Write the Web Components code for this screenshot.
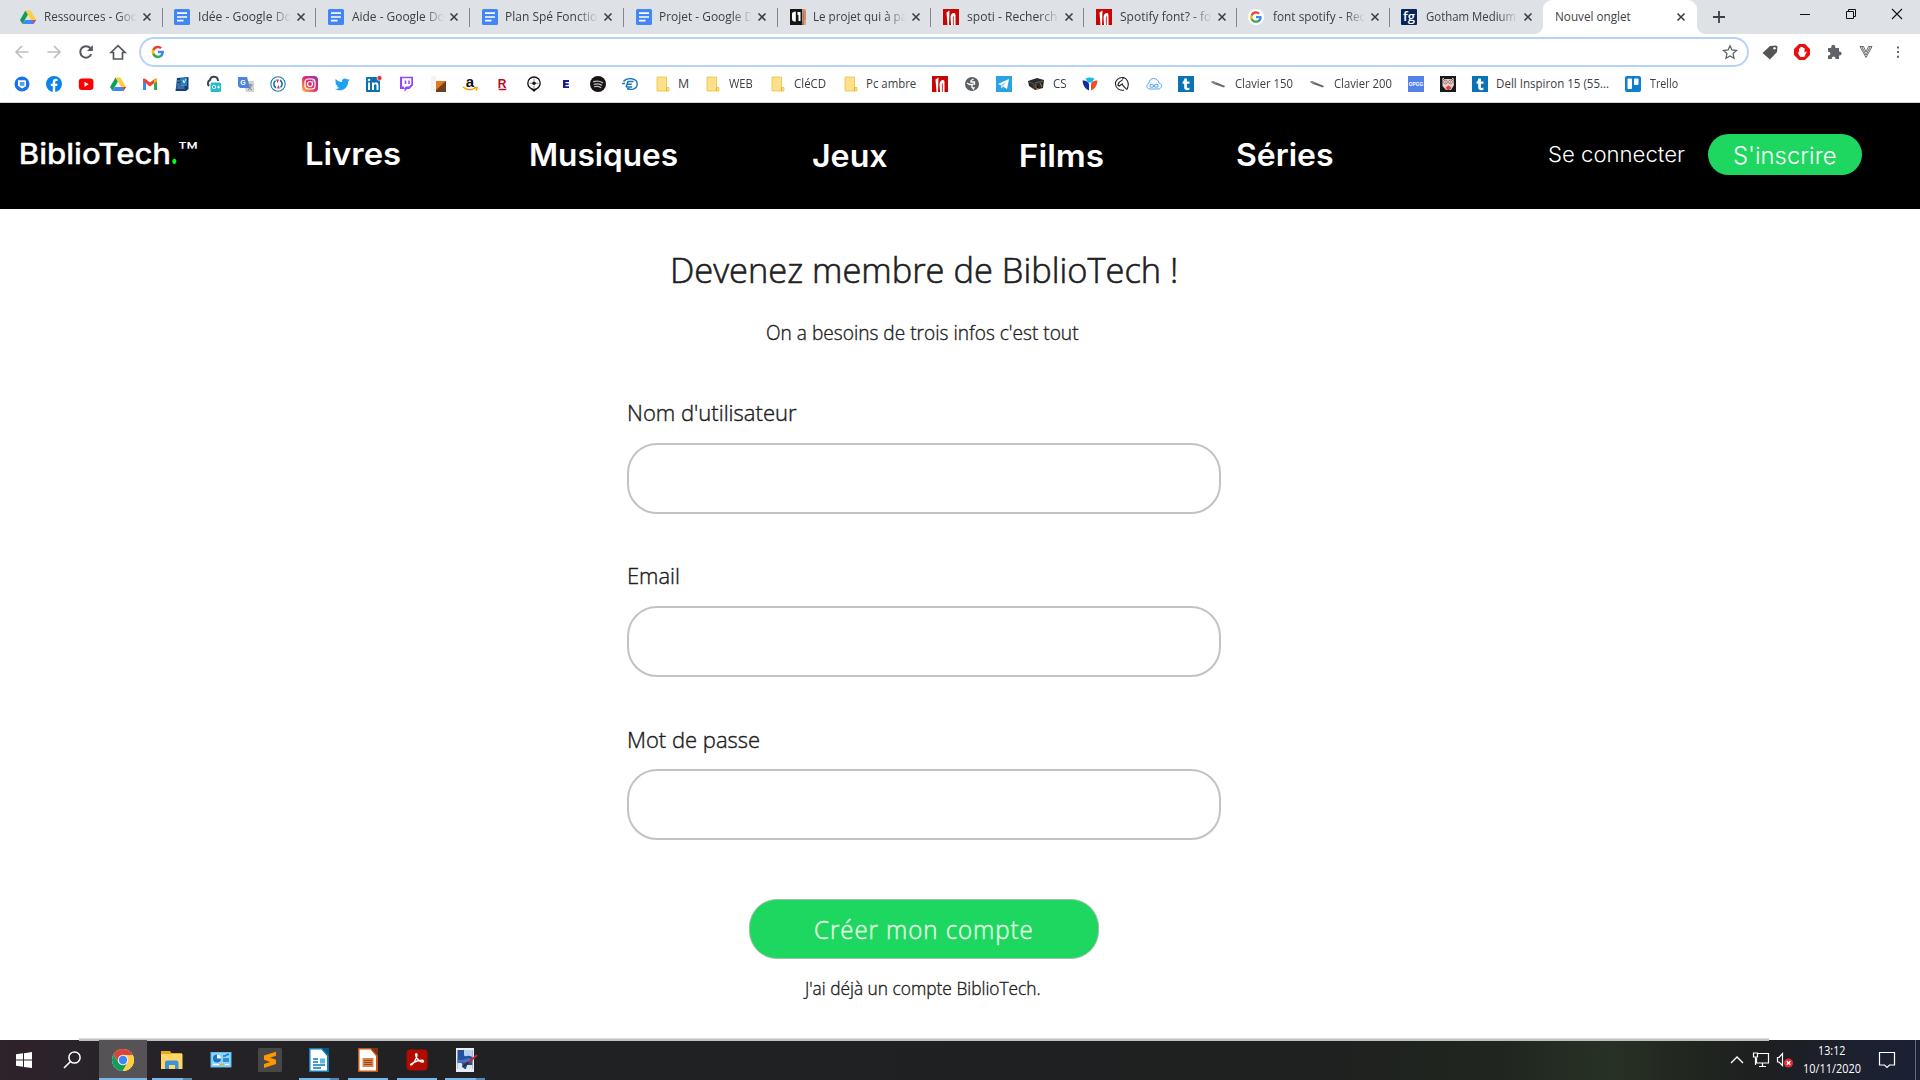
<!DOCTYPE html>
<html lang="fr">
<head>
<meta charset="utf-8">
<title>Nouvel onglet</title>
<style>
html,body{margin:0;padding:0}
body{width:1920px;height:1080px;overflow:hidden;background:#fff;font-family:"Open Sans","Noto Sans",sans-serif}
</style>
</head>
<body>
<desktop-screen></desktop-screen>
<script>
const gPaths = '<path fill="#4285f4" d="M15.5 8.2c0-.6 0-1.1-.2-1.6H8v3h4.2c-.2 1-.7 1.800-1.500 2.300v2h2.500c1.500-1.400 2.300-3.400 2.300-5.700z"/><path fill="#34a853" d="M8 15.800c2.100 0 3.900-.7 5.200-1.900l-2.500-2c-.7.5-1.600.8-2.700.8-2 0-3.800-1.400-4.400-3.200H1v2c1.300 2.600 4 4.300 7 4.300z"/><path fill="#fbbc05" d="M3.600 9.500a4.700 4.700 0 0 1 0-3v-2H1a7.800 7.800 0 0 0 0 7z"/><path fill="#ea4335" d="M8 3.300c1.100 0 2.200.4 3 1.200l2.200-2.200A7.800 7.800 0 0 0 1 4.500l2.600 2C4.200 4.700 6 3.300 8 3.300z"/>';
const letter = (t,x,y,s,c,f='Liberation Sans',w=700) => `<text x="${x}" y="${y}" font-size="${s}" fill="${c}" font-family="${f}" font-weight="${w}" text-anchor="middle">${t}</text>`;
const pen = '<path d="M1 6l2-1 12 5-1 1.400L4 8z" fill="#62676b"/><path d="M1 6l2-1 4 1.700-1 .9z" fill="#8f9498"/>';
const tumblrT = '<path fill="#0b72b5" d="M0 0h16v16H0z"/><path d="M6.200 2.500h2.700v3h2.600v2.300H8.900v3.100c0 1.300 1.200 1.300 2.500.7v2.100c-2.600 1-5.200.4-5.200-2.300V7.800H4.600V5.700c1.100-.4 1.600-1.500 1.600-3.200z" fill="#fff"/>';
const ICONS = {
 drive:'<path fill="#0f9d58" d="M5.500 1.500 0 11l2.500 4L8 5.600z"/><path fill="#ffcd40" d="M5.500 1.500h5L16 11h-5z"/><path fill="#4285f4" d="M5 11h11l-2.500 4h-11z"/><path fill="#ea4335" d="M13.200 11H16l-2.500 4z"/>',
 doc:'<rect width="16" height="16" rx="1.500" fill="#4285f4"/><path d="M3 4.200h10M3 8h10M3 11.700h6.500" stroke="#fff" stroke-width="1.700"/>',
 proj:'<rect width="16" height="16" fill="#151515"/><path d="M2 5q0-2.500 3.800-2.500v10H4Q2 12 2 10zM7.500 3h3v9h-2V6h-1z" fill="#fff"/><path d="M12 0h4v16h-3.500l-.5-5z" fill="#d9a382"/><path d="M13 0v8l.5 8M15 2v9" stroke="#9b6a50" stroke-width=".7"/>',
 n:'<path fill="#c90505" d="M0 0h16v16H0z"/><path d="M4.500 16 3.500 3.500 6.500 1.500 6 16zM8 16 7.500 8Q8 4 11 4q1.500 0 1.500 2v10h-1.800V7l-.8 1V16z" fill="#fff"/>',
 gtab:'<rect width="16" height="16" rx="8" fill="#fff"/><g transform="translate(2 2) scale(.75)">'+gPaths+'</g>',
 g:'<g transform="translate(1.500 1.500) scale(.8)">'+gPaths+'</g>',
 fg:'<rect width="16" height="16" rx="1" fill="#06245a"/>'+letter('fg',8,12,13,'#fff','Open Sans',600),
 msg:'<circle cx="8" cy="8" r="7.500" fill="#1a73e8"/><path d="M4 4.300h7q1 0 1 1v4.400q0 1-1 1L8.500 12.500 6.500 11.500 4 9.700z" fill="#fff"/><path d="M5.800 6h4.600v3.800H5.800z" fill="#5b9bef"/>',
 fb:'<circle cx="8" cy="8" r="8" fill="#0b84ee"/><path d="M6.800 16V10H4.800V7.700h2V6c0-2 1.200-3.200 3.100-3.200l1.600.1v2h-1c-1 0-1.300.6-1.300 1.200v1.600h2.300L11.100 10H9.200v6z" fill="#fff"/>',
 yt:'<rect x=".8" y="2.500" width="14.600" height="11.500" rx="3" fill="#f00"/><path d="M6.500 5.700v5l4.200-2.500z" fill="#fff"/>',
 gmail:'<path fill="#4285f4" d="M1 4l3 2v8H1z"/><path fill="#34a853" d="M12 6l3-2v10h-3z"/><path fill="#ea4335" d="M1 3.500C1 2.500 2.500 2 3.500 3L8 6.500 12.500 3c1-1 2.500-.5 2.500.5V5L8 10.500 1 5z"/><path fill="#fbbc04" d="M12 3.300 15 3v2.200l-3 2.300z"/>',
 book:'<path d="M3 2l11.500-1v12l-2.500 2H1.500z" fill="#123f78"/><path d="M6 2.500l7-1v8.500H7z" fill="#2b82bd"/><path d="M2.500 8h4M2.500 10h8M2.500 12h8M3 5h3" stroke="#75a7ce" stroke-width=".9"/><path d="m9 4 1 3 2-4" stroke="#d8f2ff" fill="none"/>',
 cloud2:'<path d="M3 10C1 8 2 5 4 4c1-5 8-4 8 1" fill="none" stroke="#384551" stroke-width="2"/><rect x="4.500" y="6.500" width="10.500" height="9.500" rx="1.500" fill="#22bcca"/><circle cx="8" cy="11" r="1.700" fill="none" stroke="#fff"/><path d="M11 11h3M12.500 9.500v3" stroke="#fff"/>',
 trans:'<path d="M5 5h11v11H8z" fill="#d2d2d2"/><path d="M0 1h9l3 11H2L0 10z" fill="#4d83dd"/>'+letter('G',5,9,7,'#fff')+'<path d="M9.500 9h5M12 7.800V9M10 14q3-2 3.500-5M10.500 10q1 3 3.500 4" fill="none" stroke="#74818c" stroke-width=".9"/>',
 sync:'<circle cx="8" cy="8" r="7.200" fill="#fff" stroke="#147faf" stroke-width="1.100"/><path d="M6 11.800A4.300 4.300 0 0 1 5.500 4.700M10 4.200A4.300 4.300 0 0 1 10.500 11.300" stroke="#166fa2" stroke-width="1.600" fill="none"/><path d="M6 3.500h3.200L7.500 7zM10 12.500H6.800L8.500 9z" fill="#e33645"/>',
 insta:'<defs><linearGradient id="ig" x1="0" y1="1" x2="1" y2="0"><stop stop-color="#ffc744"/><stop offset=".5" stop-color="#e22a6c"/><stop offset="1" stop-color="#873abe"/></linearGradient></defs><rect width="16" height="16" rx="4" fill="url(#ig)"/><rect x="3" y="3" width="10" height="10" rx="3" fill="none" stroke="#fff" stroke-width="1.200"/><circle cx="8" cy="8" r="2.500" fill="none" stroke="#fff" stroke-width="1.200"/><circle cx="11" cy="5" r=".7" fill="#fff"/>',
 tw:'<path fill="#1da1f2" d="M15.500 3.800c-.6.3-1.100.4-1.700.5.600-.4 1-.9 1.200-1.600-.6.300-1.200.6-1.900.7a3 3 0 0 0-5.100 2.700C5.500 6 3.300 4.800 1.800 3c-.8 1.400-.4 3.100.9 4-.5 0-.9-.1-1.300-.4 0 1.500 1 2.700 2.400 3-.5.100-.9.100-1.300 0 .4 1.200 1.500 2 2.800 2.100A6 6 0 0 1 1 13c1.300.8 2.900 1.300 4.600 1.300 5.500 0 8.700-4.700 8.500-8.900.5-.4 1-.9 1.400-1.600z"/>',
 li:'<rect y="1" width="14" height="15" rx="1" fill="#0a71b0"/><path d="M2 6.500h2V14H2zM6 6.500h2v1c1.500-2 4.500-1.300 4.500 1.800V14h-2V9.700c0-2-2.500-2-2.500 0V14H6z" fill="#fff"/><circle cx="3" cy="4" r="1.300" fill="#fff"/><circle cx="13.500" cy="2" r="2.500" fill="#e53131" stroke="#fff" stroke-width=".7"/>',
 twitch:'<path d="M2 .7h13v8.500L11.500 13H9l-2.500 2.700V13H2z" fill="#9146ff"/><path d="M4 2.300h9.300v6L11 10.600H8L6 12.500v-1.900H4z" fill="#fff"/><path d="M7.500 4.500v3.500M11 4.500v3.500" stroke="#9146ff" stroke-width="1.500"/>',
 orange:'<path d="M1 0v15h15V5H6V0z" fill="#f4f4f4"/><path d="M6 5h10v11H6z" fill="#e87817"/><path d="M6 14 16 5v11H6z" fill="#6b4023"/>',
 amazon:letter('a',8,10.500,15,'#111')+'<path d="M1 11q6 5 12 1.200M12 11.500h3q0 2-1.200 3" stroke="#f90" stroke-width="1.500" fill="none"/>',
 rak:letter('R',8,11.500,12,'#b70b24')+'<path d="M4 12.800h9l-1.500 1.500h-6z" fill="#b70b24"/>',
 pin:'<path d="M4 12 8 16l4-4z" fill="#111"/><circle cx="8" cy="7.200" r="6.200" fill="#fff" stroke="#111" stroke-width="1.300"/><path d="M8 2.500v2.500M8 9.500V12M3.500 7.200H6M10 7.200h2.500" stroke="#777" stroke-width=".9"/><circle cx="8" cy="7.200" r="1.800" fill="#111"/>',
 e:'<path fill="#1c1b8c" d="M5 4h6v2H7.500v1.200H10.700v1.700H7.500V10.200h3.500V12H5z"/>',
 spot:'<circle cx="8" cy="8" r="8" fill="#191414"/><path d="M3.600 5.700q5-1.500 9 1M4.200 8.300q4-1.200 7.300.8M4.700 10.700q3.400-.9 6 .8" stroke="#bbb" stroke-width="1.300" fill="none" stroke-linecap="round"/>',
 ed:'<path d="M1.500 5.500C5 1 15.200 2 15.200 8S8 14 5 12.500" fill="none" stroke="#1b77b7" stroke-width="1.400"/><path d="M5.500 5.500h6M4.800 8.200h5M4 11h6M6 5.500 4 11M0 7.500h3" fill="none" stroke="#1b77b7" stroke-width="1.500"/>',
 folder:'<path d="M3 1h9.500v10.500H15V15H3z" fill="#ffe08a" stroke="#e8c341" stroke-width=".8"/><path d="M12.500 11.500V15" stroke="#d9b12c"/>',
 globe:'<circle cx="8" cy="8" r="7" fill="#5b6064"/><path d="M9.500 3 7 4.500v1.500h3.500v2.200H8.500M3 7l2.500 1.500H8v2.700L9.500 13l.8-2" fill="none" stroke="#fff" stroke-width="1.300"/>',
 tg:'<path fill="#29a3e5" d="M0 0h16v16H0z"/><path d="M2 8l11-5-2 10-4-2.500-1.500 2-.5-3.200z" fill="#fff"/><path d="m5 9.300 5.500-4L7 10.500" fill="#9fcfec"/>',
 box:'<path d="m0 5 9-3 7 2-1 8-8 2-6-4z" fill="#292929"/><path d="m7 7 8-2" stroke="#666"/><path d="M8 8v4l3 1M12 7l2 4" stroke="#a97b38"/><path d="m1 6 5 2v5" stroke="#565656" fill="none"/>',
 pin3:'<path d="M3.500 2.500q4.500-2 9 0L10 6.500H6z" fill="#18bbe8"/><path d="M.5 4.500q5-.5 6.500 3.500v6.500Q1 12 .5 4.500z" fill="#102e9b"/><path d="M15.500 4.500q-5-.5-6.500 3.500v6.500q6-2.500 6.500-10z" fill="#f04d23"/>',
 horse:'<path d="M9.500 1.500C4.500 1 1 4.500 1.500 8.500c.5 4 4.500 6.500 8.500 5.500M9.500 1.500C13.500 3 15 7 14 10.500L13 13.500M9.500 1.500 8.500 3.500" fill="none" stroke="#222" stroke-width="1.100"/><path d="M8.500 4Q5 5.500 3.800 9l1.400 1 3-2c.5 2 2.800 3.500 4.500 5.500" fill="none" stroke="#222" stroke-width="1.100"/>',
 infc:'<path d="M4 13C0 13 0 8 3 7c0-6 9-6 10 0 4 1 3 6-1 6z" fill="#f4faff" stroke="#5fa8e9"/><path d="M8 9.800c-1.500-2-4-2-4 0s2.500 2 4 0 4-2 4 0-2.500 2-4 0z" fill="none" stroke="#5fa8e9" stroke-width="1.100"/>',
 t:tumblrT, pen,
 opgg:'<rect width="16" height="16" fill="#5383e8"/>'+letter('OPGG',8,9.700,4.800,'#fff'),
 face:'<rect width="16" height="16" fill="#151919"/><path d="M2.500 4 5 3h6l2.500 1L14 9l-3 5H6L2.500 10z" fill="#e9cfc8"/><circle cx="5.500" cy="6" r="1.800" fill="#fff" stroke="#8b5550" stroke-width=".8"/><circle cx="10.500" cy="6" r="1.800" fill="#fff" stroke="#8b5550" stroke-width=".8"/><path d="M5.500 12q3-5 6 0l-2 2H7.500z" fill="#d74550"/><path d="M5.200 6h.9M10 6h.9" stroke="#333"/><path d="M2 3.500 4 2M12 2l2 1.500" stroke="#eee"/>',
 trello:'<rect width="16" height="16" rx="2" fill="#0c7fd0"/><rect x="2.500" y="2.500" width="4.500" height="10.500" rx=".8" fill="#fff"/><rect x="9" y="2.500" width="4.500" height="6.500" rx=".8" fill="#fff"/>',
 back:'<path d="M14.500 8H2M8 2 2 8l6 6" fill="none" stroke="#bcbec0" stroke-width="1.700"/>',
 fwd:'<path d="M1.500 8H14M8 2l6 6-6 6" fill="none" stroke="#bcbec0" stroke-width="1.700"/>',
 reload:'<path d="M13.200 10.200A5.700 5.700 0 1 1 12.300 4.200L13.700 6" fill="none" stroke="#54585c" stroke-width="2"/><path d="M14.800 1v6H9z" fill="#54585c"/>',
 home:'<path d="M1 8.500 8 1.700l7 6.800H12.500V15h-9V8.500z" fill="none" stroke="#54585c" stroke-width="1.700"/>',
 star:'<path d="m8 1.800 1.900 4.200 4.600.5-3.400 3.100.9 4.600L8 11.900l-4 2.300.9-4.600L1.500 6.500 6.100 6z" fill="none" stroke="#5f6368" stroke-width="1.300"/>',
 tag:'<path d="m8 2 6-.5 1.500 1L15 8l-7 7.500L.5 9z" fill="#555"/><circle cx="12.500" cy="4.300" r="1.200" fill="#fff"/>',
 abp:'<path d="M5 0h6l5 5v6l-5 5H5l-5-5V5z" fill="#e81212"/><path d="M4 8.500 5 8V4.500h1.300V8V3h1.400v5V3h1.400v5V4h1.400v4.800l1.500-1.500.7.7-2.500 5H6.500Q5 12 4 8.500z" fill="#fff"/>',
 puzzle:'<path d="M2 4h3.200C4.800-.2 9.800-.2 9.400 4H13v3.500c3.500-.3 3.500 4.300 0 4V15H9.500c.3-3.500-4-3.500-3.700 0H2v-3.500c3.200.3 3.200-4 0-3.700z" fill="#5f6368"/>',
 v:'<path d="M2 2.500 8 13.500 14 2.500M5.500 2.500 8 8l2.500-5.500M2 2.500h3.500M10.500 2.500H14M3.700 2.500 8 11 12.300 2.500" fill="none" stroke="#55595d" stroke-width=".9"/>',
 dots:'<path d="M7 2.500h2v2H7zM7 7h2v2H7zM7 11.700h2v2H7z" fill="#5f6368"/>',
 plus:'<path d="M8 2v12M2 8h12" stroke="#3c4043" stroke-width="1.800"/>',
 x:'<path d="m4.500 4.500 7 7m0-7-7 7" stroke="#3c4043" stroke-width="1.600"/>',
 min:'<path d="M3 8.500h10" stroke="#111"/>',
 restore:'<path d="M3.500 5.500h7v7h-7zM5.500 5.500v-2h7v7h-2" fill="none" stroke="#111"/>',
 close:'<path d="m3 3 10 10m0-10L3 13" stroke="#111" stroke-width="1.100"/>'
};
/* 24px task icons */
const TASKS = {
 win:'<path fill="#fff" d="M4 6.300 11 5.300V11.600H4zM12 5.200 20 4v7.600h-8zM4 12.500h7v6.300l-7-1zM12 12.500h8V20l-8-1.100z"/>',
 search:'<circle cx="14.500" cy="9.500" r="5.600" fill="none" stroke="#fff" stroke-width="1.500"/><path d="M10.500 13.500 4 20" stroke="#fff" stroke-width="1.600"/>',
 chrome:'<circle cx="12" cy="12" r="11" fill="#fff"/><path fill="#db4437" d="M2.470 6.500 7.400 14.600 9 8 21.800 7A11 11 0 0 0 2.470 6.500z"/><path fill="#0f9d58" d="M2.470 6.500A11 11 0 0 0 11.700 23L16.500 14.700 7.400 14.600z"/><path fill="#ffcd40" d="M21.800 7H12l4.700 7.500L11.700 23A11 11 0 0 0 21.800 7z"/><circle cx="12" cy="12" r="5.200" fill="#f1f1f1"/><circle cx="12" cy="12" r="4.200" fill="#4285f4"/>',
 folder:'<path d="M1 3h9l1.500 2H22v16H1z" fill="#e6a817"/><path d="M1 6h21.500v15H1z" fill="#ffd766"/><path d="M5 21v-7l1.500-1.500h10.500l1.500 1.500v7h-3.500v-4h-6v4z" fill="#3c93dc"/>',
 panel:'<rect x="1.500" y="4" width="21" height="15.500" fill="#5bbdf0"/><path d="M2.500 5h19v13.500h-19z" fill="#8cd5fa"/><circle cx="8" cy="10.500" r="4" fill="#1874bd"/><path d="M8 10.500v-4A4 4 0 0 1 12 10.500z" fill="#fff"/><path d="M14 8h2l2-1.500h2M14 11h6M14 13h6" stroke="#1874bd" stroke-width="1.300" fill="none"/><path d="M4 16.500h6" stroke="#fff" stroke-width="1.300"/><path d="M11 16.500h4" stroke="#f6a623" stroke-width="1.500"/><path d="M16 16.500h4" stroke="#fff"/>',
 sublime:'<rect width="24" height="24" rx="1.500" fill="#474747"/><path d="M6 7.500 18 3.800v4l-6 1.900 6 2V16L6 20v-4l6-2-6-2.200z" fill="#ff9800"/>',
 writer:'<path d="M2 0h13l7 7v17H2z" fill="#137cb9"/><path d="M3.500 1.500h11L20 8v14.500H3.500z" fill="#fff"/><path d="M15 0h7v8z" fill="#075680"/><path d="M6 11h5M6 14h5M6 17h12M6 20h8" stroke="#087ab5" stroke-width="1.500"/><path d="M13 10.500h5v5h-5z" fill="#60b6de"/>',
 impress:'<path d="M2 0h13l7 7v17H2z" fill="#c55713"/><path d="M3.500 1.500h11L20 8v14.500H3.500z" fill="#fff"/><path d="M15 0h7v8z" fill="#7b3310"/><path d="M6.500 10h11v9h-11z" fill="#d98252"/><path d="M8 12.500h8M8 14.500h8M8 16.500h8" stroke="#a4460e"/>',
 acrobat:'<rect x="1.500" y="1.500" width="21" height="21" rx="4" fill="#b30b00"/><path d="M6 17c2 0 5.800-6.700 6-10 .1-1.600-1.600-1.600-1.400 0 .3 3 4.400 7.200 7.200 7 1.300-.2.600-1.700-.8-1.700-3 0-7 1.300-10.200 3.200-1.500.8-1.500 1.500-.8 1.500z" fill="none" stroke="#fff" stroke-width="1.400"/>',
 paint:'<path d="M3 0h18v24H3z" fill="#e9edf5"/><path d="M4.500 2h15v19h-15z" fill="#274f9e"/><path d="M11 2h8.500v7q-4-2-6-1t-2.500-1z" fill="#b9d1f1"/><path d="M4.500 11q4 2 8 0t7 1v2l-15 1z" fill="#4674bf"/><path d="M4.500 15h4l3 6h-7zM14 17h5.500v4H13z" fill="#dce7f4"/><path d="m24 7-9 8" stroke="#c12828" stroke-width="2"/><path d="m15.500 14.500-6 4.500" stroke="#31323c" stroke-width="2.600"/>',
 up:'<path d="m6 15 6-6 6 6" fill="none" stroke="#fff" stroke-width="1.400"/>',
 net:'<path d="M9 5.500h10.500v9.500H7.500V10M4.500 5h4v4h-4zM6.500 9v8M10 18.500h7M13.500 15v3.500" fill="none" stroke="#fff" stroke-width="1.200"/>',
 vol:'<path d="M4.500 9.500H6l3.500-4v12L6 14H4.500z" fill="none" stroke="#fff" stroke-width="1.200"/><circle cx="15.500" cy="15" r="4.600" fill="#e12a34"/><path d="m13.700 13.200 3.600 3.600m0-3.600-3.600 3.600" stroke="#fff" stroke-width="1.400"/>',
 note:'<path d="M4.500 4.500h15v12.500H14.500l-2.500 2.500-2.500-2.500h-5z" fill="none" stroke="#fff" stroke-width="1.200"/>'
};
const define=(name,html,setup)=>customElements.define(name,class extends HTMLElement{
  connectedCallback(){ if(this.shadowRoot) return;
    const r=this.attachShadow({mode:'open'}); r.innerHTML=typeof html==='function'?html(this):html; setup&&setup(this,r); }
});

define('ui-icon',el=>{const big=el.hasAttribute('task');const n=el.getAttribute('name');
  return `<style>:host{display:block;flex:none;width:${big?24:16}px;height:${big?24:16}px}svg{display:block;overflow:visible}</style><svg width="100%" height="100%" viewBox="0 0 ${big?'24 24':'16 16'}">${(big?TASKS:ICONS)[n]}</svg>`;});

/* Text whose ink spans exactly w pixels; the bottom of the box is its baseline.
   "st" thickens the strokes, for weights between those of the installed font. */
const ctx=document.createElement('canvas').getContext('2d');
define('fit-text',`<style>:host{display:flow-root;flex:none}span{display:block;width:max-content;white-space:pre;line-height:normal;transform-origin:0 0}</style><span><slot></slot></span>`,(el,r)=>{
  const a=(k,d)=>el.getAttribute(k)||d, w=+a('w'), s=+a('s'), h=+a('h'), f=a('f','Open Sans'), wt=a('wt','400'), ls=+a('ls','0'), st=a('st','0');
  const sp=r.querySelector('span');
  sp.style.cssText=`font:${wt} ${s}px "${f}",sans-serif;letter-spacing:${ls}px;-webkit-text-stroke:${st}px currentColor`;
  ctx.font=`${wt} ${s}px "${f}"`; ctx.letterSpacing=ls+'px';
  const m=ctx.measureText(el.textContent), ink=m.actualBoundingBoxLeft+m.actualBoundingBoxRight, k=w/ink;
  el.style.width=w+'px'; el.style.height=h+'px';
  sp.style.marginTop=(h-Math.round(m.fontBoundingBoxAscent))+'px';
  sp.style.transform=`translateX(${m.actualBoundingBoxLeft*k}px) scaleX(${k})`;
});

define('browser-tab',el=>`<style>
 :host{display:flex;flex:none;width:${el.getAttribute('tw')}px;height:34px;box-sizing:border-box;padding:9px 0 0 11.500px;position:relative}
 :host(:not([active]):not([last]))::after{content:"";position:absolute;right:0;top:8px;width:1px;height:19px;background:#84878b}
 .t{width:93px;height:20px;margin-left:8.500px;overflow:hidden;-webkit-mask:linear-gradient(90deg,#000 72px,transparent 92px);flex:none}
 .t fit-text{margin-top:3px}
 ui-icon.c{margin-left:1px;margin-top:0}
 :host([active]){background:#fff;border-radius:9px 9px 0 0}
 :host([active]) .t{margin-left:2px;width:100px;-webkit-mask:none}
 :host([active]) ui-icon.c{margin-left:17px}
 .l,.r{display:none}
 :host([active]) .l,:host([active]) .r{display:block;position:absolute;bottom:0;width:8px;height:8px;left:-8px;background:radial-gradient(circle at 0 0,transparent 7.500px,#fff 8px)}
 :host([active]) .r{left:auto;right:-8px;background:radial-gradient(circle at 100% 0,transparent 7.500px,#fff 8px)}
 </style><i class="l"></i><i class="r"></i>${el.hasAttribute('active')?'':`<ui-icon name="${el.getAttribute('icon')}"></ui-icon>`}<div class="t"><fit-text w="${el.getAttribute('w')}" s="12" h="9">${el.getAttribute('label')}</fit-text></div><ui-icon class="c" name="x"></ui-icon>`);

const tabs=[['drive','Ressources - Goo',92.5],['doc','Idée - Google Do',92.5],['doc','Aide - Google Do',92.5],['doc','Plan Spé Fonctio',91],['doc','Projet - Google D',92.5],['proj','Le projet qui à pa',92.5],['n','spoti - Recherch',90],['n','Spotify font? - fo',91],['gtab','font spotify - Rec',92.5],['fg','Gotham Medium',90]];
define('tab-strip',`<style>:host{display:flex;height:34px;background:#dee1e6;padding-left:8.700px;color:#3c4043}
 .plus{margin:9px 0 0 14px}.ctl{display:flex;margin-left:auto;gap:30px;padding:6px 15px 0 0}</style>
 ${tabs.map((t,i)=>`<browser-tab icon="${t[0]}" label="${t[1]}" w="${t[2]}" tw="${i<5?153.9:152.95}"${i==9?' last':''}></browser-tab>`).join('')}
 <browser-tab active label="Nouvel onglet" w="74.500" tw="154"></browser-tab><ui-icon class="plus" name="plus"></ui-icon>
 <div class="ctl"><ui-icon name="min"></ui-icon><ui-icon name="restore"></ui-icon><ui-icon name="close"></ui-icon></div>`);

define('tool-bar',`<style>:host{display:flex;height:36px;box-sizing:border-box;padding:3px 14px 0;align-items:flex-start;background:#fff}
 .nav,.ext{display:flex;gap:16px;padding-top:7px}.ext{margin-left:13px}
 .omni{flex:1;margin-left:13px;height:30px;box-sizing:border-box;border:2px solid #b5d3f8;border-radius:15px;display:flex;justify-content:space-between;padding:5px 9px}</style>
 <div class="nav"><ui-icon name="back"></ui-icon><ui-icon name="fwd"></ui-icon><ui-icon name="reload"></ui-icon><ui-icon name="home"></ui-icon></div>
 <div class="omni"><ui-icon name="g"></ui-icon><ui-icon name="star"></ui-icon></div>
 <div class="ext"><ui-icon name="tag"></ui-icon><ui-icon name="abp"></ui-icon><ui-icon name="puzzle"></ui-icon><ui-icon name="v"></ui-icon><ui-icon name="dots"></ui-icon></div>`);

define('book-mark',el=>`<style>:host{display:flex;flex:none;gap:9px;color:#3c4043}fit-text{margin-top:3px}</style><ui-icon name="${el.getAttribute('icon')}"></ui-icon>${el.getAttribute('w')?`<fit-text w="${el.getAttribute('w')}" h="9" s="12">${el.getAttribute('label')}</fit-text>`:''}`);
const marks=['msg','fb','yt','drive','gmail','book','cloud2','trans','sync','insta','tw','li','twitch','orange','amazon','rak','pin','e','spot','ed',['folder','M',9.3],['folder','WEB',24],['folder','CléCD',31.500],['folder','Pc ambre',49.500],'n','globe','tg',['box','CS',13.2],'pin3','horse','infc','t',['pen','Clavier 150',58],['pen','Clavier 200',58],'opgg','face',['t','Dell Inspiron 15 (55...',112],['trello','Trello',28]];
define('bookmark-bar',`<style>:host{display:flex;height:33px;box-sizing:border-box;padding:6px 14px 0;gap:16px;border-bottom:1px solid #d5d5d5;background:#fff}</style>
 ${marks.map(m=>Array.isArray(m)?`<book-mark icon="${m[0]}" label="${m[1]}" w="${m[2]}"></book-mark>`:`<book-mark icon="${m}"></book-mark>`).join('')}`);

define('site-header',`<style>:host{display:flex;height:106px;background:#000;color:#fff;align-items:flex-start}
 .btn{margin:31px 0 0 22px;width:154px;height:41px;border-radius:20.500px;background:#1ed760;display:flex;box-sizing:border-box;padding:13px 0 0 26px}
 .dot{color:#0f2}</style>
 <fit-text style="margin:41px 0 0 20.500px" w="148" h="20" s="28" f="Inter" wt="500" st=".3">BiblioTech</fit-text><fit-text class="dot" style="margin:41px 0 0 3px" w="5" h="20" s="32" f="Inter" wt="700">.</fit-text>
 <fit-text style="margin:45.500px 0 0 2.500px" w="18" h="12.500" s="26" f="Inter" wt="400">™</fit-text>
 <fit-text style="margin:39px 0 0 110px" w="93" h="23" s="31" f="Inter" wt="600">Livres</fit-text>
 <fit-text style="margin:40px 0 0 131.300px" w="146" h="23" s="31" f="Inter" wt="600">Musiques</fit-text>
 <fit-text style="margin:41px 0 0 136px" w="74" h="23" s="31" f="Inter" wt="600">Jeux</fit-text>
 <fit-text style="margin:41px 0 0 134px" w="82" h="23" s="31" f="Inter" wt="600">Films</fit-text>
 <fit-text style="margin:40px 0 0 133.500px" w="95.500" h="23" s="31" f="Inter" wt="600">Séries</fit-text>
 <fit-text style="margin:43px 0 0 217px" w="136.500" h="16" s="21" f="Inter" wt="300">Se connecter</fit-text>
 <div class="btn"><fit-text w="102" h="17" s="23.500" f="Inter" wt="300">S'inscrire</fit-text></div>`);

define('form-field',el=>`<style>:host{display:block;width:594px}.box{box-sizing:border-box;width:594px;height:71px;border:2px solid #c3c3c3;border-radius:30px;background:#fff}
 fit-text{margin-left:1.500px;margin-bottom:${el.getAttribute('gap')}px}</style>
 <fit-text w="${el.getAttribute('w')}" h="16" s="22" wt="300" st=".4">${el.getAttribute('label')}</fit-text><div class="box"></div>`);

define('signup-form',`<style>:host{display:block;flex:1;background:#fff;color:#202020}
 .col{display:flex;flex-direction:column;width:594px;margin-left:627px}
 .btn{margin:60px 0 0 122px;width:350px;height:60px;box-sizing:border-box;border:1px solid #9fbfa6;border-radius:28px;background:#1ed760;color:#e6fbe3;padding:21px 0 0 65px}</style>
 <div class="col">
 <fit-text style="margin:49px 0 0 45.500px" w="503" h="25" s="34.500" wt="300" st=".6">Devenez membre de BiblioTech !</fit-text>
 <fit-text style="margin:42.500px 0 0 139.500px" w="312" h="14" s="19.500" wt="300" st=".35">On a besoins de trois infos c'est tout</fit-text>
 <form-field style="margin-top:65.500px" label="Nom d'utilisateur" w="168" gap="22"></form-field>
 <form-field style="margin-top:54px" label="Email" w="50" gap="22"></form-field>
 <form-field style="margin-top:55px" label="Mot de passe" w="130" gap="21"></form-field>
 <div class="btn" style="margin-top:59px"><fit-text w="217" h="18" s="25" ls="1" wt="300" st=".45">Créer mon compte</fit-text></div>
 <fit-text style="margin:22.500px 0 0 176px" w="236.500" h="13" s="17.500" wt="300" st=".35">J'ai déjà un compte BiblioTech.</fit-text>
 </div>`);

define('task-button',el=>`<style>:host{display:flex;flex:none;position:relative;width:49px;height:40px;justify-content:center;align-items:center}
 :host([active]){background:#555356}
 :host([line])::after{content:"";position:absolute;bottom:0;left:4.500px;width:40px;height:2px;background:#76b9ed}
 :host([line=full])::after{left:0;width:48px}
 :host([line=multi])::after{background:linear-gradient(90deg,#76b9ed 31px,#5589b3 31px)}</style><ui-icon task name="${el.getAttribute('name')}"></ui-icon>`);

define('task-bar',`<style>:host{display:flex;position:relative;height:40px;color:#fff;background:linear-gradient(90deg,#2e222b 0,#29232a 80px,#242226 200px,#202123 500px,#1f2020 1300px,#20261f 1500px,#283126 1610px,#22271f 1680px,#1d1f20 1760px,#1c2030 1860px,#1b2135 1920px)}
 :host::before{content:"";position:absolute;left:79px;width:1690px;top:-2px;height:3px;background:linear-gradient(#dedede 33%,#bfc2c1 34%)}
 .clock{display:flex;flex-direction:column;align-items:center;width:58px;margin-left:6px}
 .tray{display:flex;margin-left:auto;align-items:flex-start}.tray ui-icon{margin-top:8px}
 .end{width:1px;height:40px;background:#666b78;margin:0 4px 0 16px}</style>
 <task-button name="win" style="width:48px"></task-button><task-button name="search" style="width:48px;margin-right:3px"></task-button>
 <task-button name="chrome" active line="full" style="width:48px"></task-button><task-button name="folder" line="multi"></task-button><task-button name="panel"></task-button><task-button name="sublime"></task-button><task-button name="writer" line="multi"></task-button><task-button name="impress" line="one"></task-button><task-button name="acrobat" line="one"></task-button><task-button name="paint" line="multi" style="margin-left:-1px"></task-button>
 <div class="tray"><ui-icon task name="up"></ui-icon><ui-icon task name="net"></ui-icon><ui-icon task name="vol"></ui-icon>
 <div class="clock"><fit-text style="margin-top:6px" w="26.500" h="9" s="12">13:12</fit-text><fit-text style="margin-top:9px" w="57" h="9" s="12">10/11/2020</fit-text></div>
 <ui-icon task name="note" style="margin-left:14px"></ui-icon><i class="end"></i></div>`);

define('desktop-screen',`<style>:host{display:flex;flex-direction:column;width:1920px;height:1080px}</style>
 <tab-strip></tab-strip><tool-bar></tool-bar><bookmark-bar></bookmark-bar><site-header></site-header><signup-form></signup-form><task-bar></task-bar>`);
</script>
</body>
</html>
